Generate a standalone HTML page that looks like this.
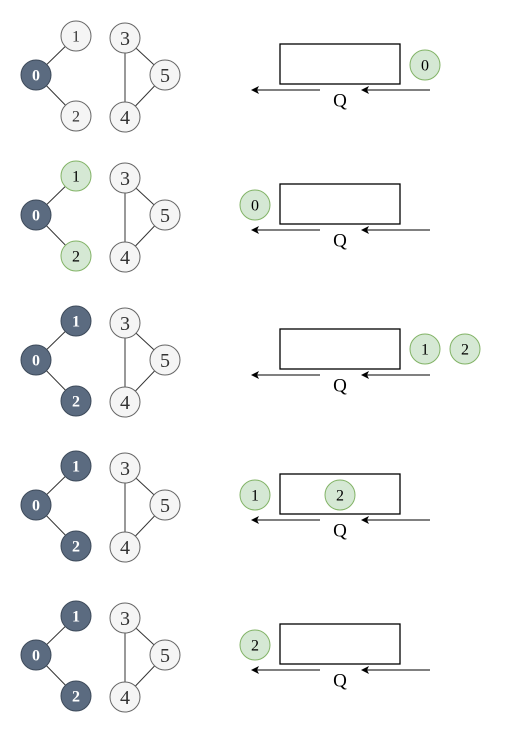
<!DOCTYPE html>
<html><head><style>body{margin:0;background:#fff}svg{display:block}text{font-family:"Liberation Serif",serif;text-anchor:middle;dominant-baseline:central}</style></head><body>
<svg width="521" height="741" xmlns="http://www.w3.org/2000/svg">
<defs>
<marker id="a" markerWidth="8" markerHeight="8" refX="7" refY="4" orient="auto" markerUnits="userSpaceOnUse"><path d="M0,0 L8,4 L0,8 L2,4z" fill="#000"/></marker>
<g id="base">
<line x1="36" y1="75" x2="76" y2="36" stroke="#333"/>
<line x1="36" y1="75" x2="76" y2="116" stroke="#333"/>
<line x1="125" y1="38" x2="125" y2="117" stroke="#333"/>
<line x1="125" y1="38" x2="165" y2="75" stroke="#333"/>
<line x1="125" y1="117" x2="165" y2="75" stroke="#333"/>
<circle cx="125" cy="38" r="15" fill="#f5f5f5" stroke="#666"/><text x="125" y="39" font-size="20" fill="#333">3</text>
<circle cx="165" cy="75" r="15" fill="#f5f5f5" stroke="#666"/><text x="165" y="76" font-size="20" fill="#333">5</text>
<circle cx="125" cy="117" r="15" fill="#f5f5f5" stroke="#666"/><text x="125" y="118" font-size="20" fill="#333">4</text>
<circle cx="36" cy="75" r="15" fill="#5b6b80" stroke="#3d4a5a"/><text x="36" y="76" font-size="16" font-weight="bold" fill="#fff">0</text>
<rect x="280" y="44" width="120" height="40" fill="none" stroke="#000" stroke-width="1.3"/>
<line x1="320" y1="90" x2="252" y2="90" stroke="#000" marker-end="url(#a)"/>
<line x1="430" y1="90" x2="362" y2="90" stroke="#000" marker-end="url(#a)"/>
<text x="340" y="101" font-size="19">Q</text>
</g>
</defs>
<g>
<use href="#base"/>
<circle cx="76" cy="36" r="15" fill="#f5f5f5" stroke="#666"/><text x="76" y="37" font-size="16" fill="#333">1</text>
<circle cx="76" cy="116" r="15" fill="#f5f5f5" stroke="#666"/><text x="76" y="117" font-size="16" fill="#333">2</text>
<circle cx="425" cy="65" r="15" fill="#d5e8d4" stroke="#82b366"/><text x="425" y="66" font-size="16">0</text>
</g>
<g transform="translate(0,140)">
<use href="#base"/>
<circle cx="76" cy="36" r="15" fill="#d5e8d4" stroke="#82b366"/><text x="76" y="37" font-size="16">1</text>
<circle cx="76" cy="116" r="15" fill="#d5e8d4" stroke="#82b366"/><text x="76" y="117" font-size="16">2</text>
<circle cx="255" cy="65" r="15" fill="#d5e8d4" stroke="#82b366"/><text x="255" y="66" font-size="16">0</text>
</g>
<g transform="translate(0,285)">
<use href="#base"/>
<circle cx="76" cy="36" r="15" fill="#5b6b80" stroke="#3d4a5a"/><text x="76" y="37" font-size="16" font-weight="bold" fill="#fff">1</text>
<circle cx="76" cy="116" r="15" fill="#5b6b80" stroke="#3d4a5a"/><text x="76" y="117" font-size="16" font-weight="bold" fill="#fff">2</text>
<circle cx="425" cy="64" r="15" fill="#d5e8d4" stroke="#82b366"/><text x="425" y="65" font-size="16">1</text>
<circle cx="465" cy="64" r="15" fill="#d5e8d4" stroke="#82b366"/><text x="465" y="65" font-size="16">2</text>
</g>
<g transform="translate(0,430)">
<use href="#base"/>
<circle cx="76" cy="36" r="15" fill="#5b6b80" stroke="#3d4a5a"/><text x="76" y="37" font-size="16" font-weight="bold" fill="#fff">1</text>
<circle cx="76" cy="116" r="15" fill="#5b6b80" stroke="#3d4a5a"/><text x="76" y="117" font-size="16" font-weight="bold" fill="#fff">2</text>
<circle cx="255" cy="65" r="15" fill="#d5e8d4" stroke="#82b366"/><text x="255" y="66" font-size="16">1</text>
<circle cx="340" cy="65" r="15" fill="#d5e8d4" stroke="#82b366"/><text x="340" y="66" font-size="16">2</text>
</g>
<g transform="translate(0,580)">
<use href="#base"/>
<circle cx="76" cy="36" r="15" fill="#5b6b80" stroke="#3d4a5a"/><text x="76" y="37" font-size="16" font-weight="bold" fill="#fff">1</text>
<circle cx="76" cy="116" r="15" fill="#5b6b80" stroke="#3d4a5a"/><text x="76" y="117" font-size="16" font-weight="bold" fill="#fff">2</text>
<circle cx="255" cy="65" r="15" fill="#d5e8d4" stroke="#82b366"/><text x="255" y="66" font-size="16">2</text>
</g>
</svg>
</body></html>
